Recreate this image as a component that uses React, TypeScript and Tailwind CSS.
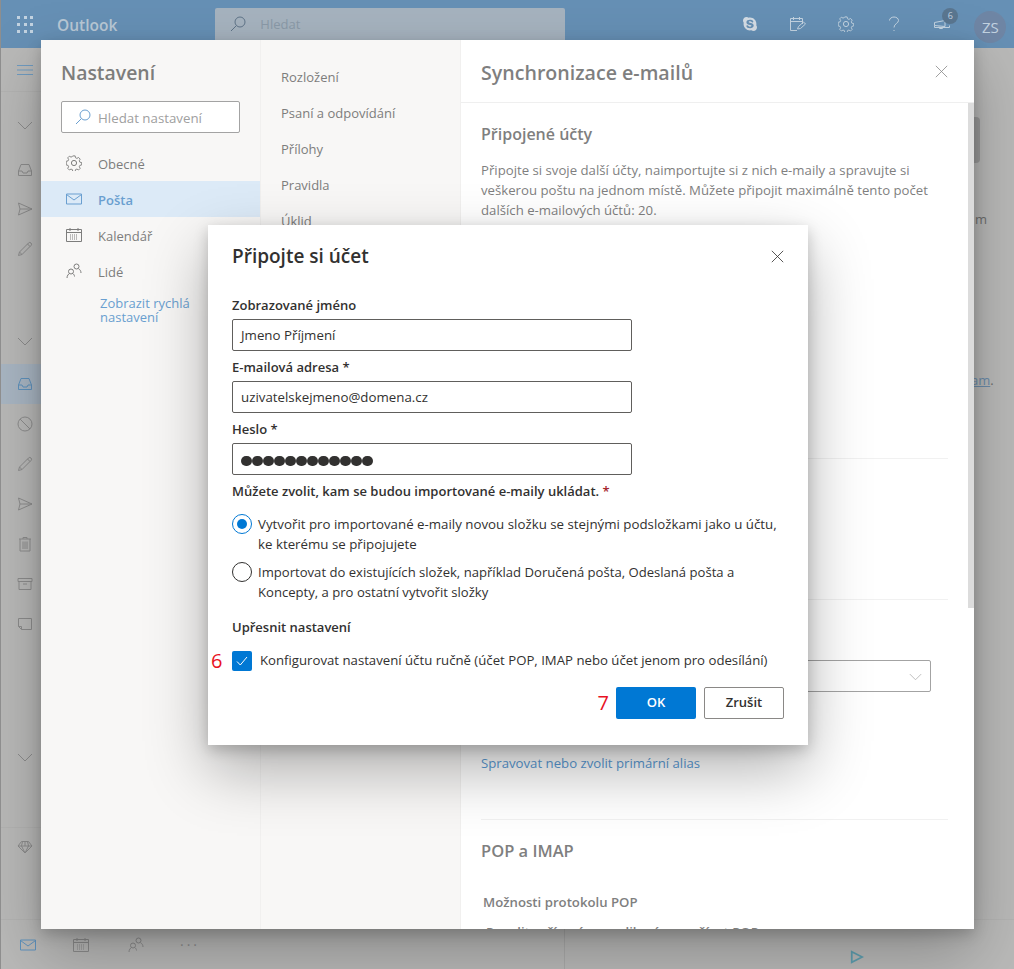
import { FaSkype } from "react-icons/fa";

type IconProps = { className?: string };

const Svg = ({ className, children }: IconProps & { children: React.ReactNode }) => (
  <svg viewBox="0 0 16 16" fill="none" stroke="currentColor" strokeWidth="1" className={className}>
    {children}
  </svg>
);

const SearchIcon = ({ className }: IconProps) => (
  <Svg className={className}>
    <circle cx="10" cy="6" r="5" />
    <path d="M6.4 9.6 1 15" />
  </Svg>
);
const ChevronIcon = ({ className }: IconProps) => (
  <Svg className={className}>
    <path d="M1 5l7 7 7-7" />
  </Svg>
);
const InboxIcon = ({ className }: IconProps) => (
  <Svg className={className}>
    <path d="M1.5 9 4 2.5h8L14.5 9v4.5h-13zM1.5 9H5l1 2h4l1-2h3.5" />
  </Svg>
);
const SendIcon = ({ className }: IconProps) => (
  <Svg className={className}>
    <path d="M1.5 2 15 8 1.5 14l1.5-6zM3 8h12" />
  </Svg>
);
const PencilIcon = ({ className }: IconProps) => (
  <Svg className={className}>
    <path d="M1.5 14.5 2.5 11 11.5 2a1.6 1.6 0 0 1 2.5 2.5L5 13.5zM2.5 11 5 13.5M10.5 3l2.5 2.5" />
  </Svg>
);
const BlockIcon = ({ className }: IconProps) => (
  <Svg className={className}>
    <circle cx="8" cy="8" r="7" />
    <path d="M3 3l10 10" />
  </Svg>
);
const TrashIcon = ({ className }: IconProps) => (
  <Svg className={className}>
    <path d="M2 3h12M3 3v12h10V3M6 3V1.5h4V3M6 5.5V13M8 5.5V13M10 5.5V13" />
  </Svg>
);
const ArchiveIcon = ({ className }: IconProps) => (
  <Svg className={className}>
    <path d="M1 2.5h14v3H1zM2 5.5v8h12v-8M6 8h4" />
  </Svg>
);
const NoteIcon = ({ className }: IconProps) => (
  <Svg className={className}>
    <path d="M1.5 2.5h13v11h-10l-3-3zM1.5 10.5h3v3" />
  </Svg>
);
const GemIcon = ({ className }: IconProps) => (
  <Svg className={className}>
    <path d="M4.5 2.5h7L15 7l-7 7-7-7zM1 7h14M5.5 2.5 4.5 7 8 14l3.5-7-1-4.5M8 2.5V7" />
  </Svg>
);
const GearIcon = ({ className }: IconProps) => (
  <Svg className={className}>
    <circle cx="8" cy="8" r="2.6" />
    <path d="M6.7 1h2.600l.4 2 1.500.7 1.800-1 1.800 1.800-1 1.800.6 1.500 2 .4v2.600l-2 .5-.6 1.500 1 1.700-1.800 1.800-1.800-1-1.500.6-.4 2.100H6.700l-.4-2.100-1.500-.6-1.800 1-1.800-1.800 1-1.700-.6-1.500-2-.5V6.800l2-.4.6-1.500-1-1.800L3 1.300l1.800 1 1.500-.7z" transform="translate(.6 0) scale(.92)" />
  </Svg>
);
const MailIcon = ({ className }: IconProps) => (
  <Svg className={className}>
    <path d="M.5 3h15v10H.5zM.5 3.5 8 9l7.500-5.500" />
  </Svg>
);
const CalendarIcon = ({ className }: IconProps) => (
  <Svg className={className}>
    <path d="M.5 2.5h15v12H.5zM.5 5.500h15M4 1v3M12 1v3" />
    <path d="M4 8h8M4 10h8M4 12h8" strokeDasharray="1 1" />
  </Svg>
);
const PeopleIcon = ({ className }: IconProps) => (
  <Svg className={className}>
    <circle cx="5" cy="8.5" r="2.5" />
    <circle cx="10.500" cy="3.5" r="2.5" />
    <path d="M1 15c0-2.500 1.500-4 2.500-4.500M6.500 10.500c1 .5 2 1.500 2 3M12.500 5.700C14 6.500 15 8 15 10" />
  </Svg>
);
const CloseIcon = ({ className }: IconProps) => (
  <Svg className={className}>
    <path d="M1 1l14 14M15 1 1 15" />
  </Svg>
);

const railTop = [
  { Icon: ChevronIcon, y: "mt-[25px]" },
  { Icon: InboxIcon, y: "mt-[29px]" },
  { Icon: SendIcon, y: "mt-[23px]" },
  { Icon: PencilIcon, y: "mt-[24px]" },
];

const railFolders = [BlockIcon, PencilIcon, SendIcon, TrashIcon, ArchiveIcon, NoteIcon];

const settingsNav = [
  { label: "Obecné", Icon: GearIcon },
  { label: "Pošta", Icon: MailIcon, active: true },
  { label: "Kalendář", Icon: CalendarIcon },
  { label: "Lidé", Icon: PeopleIcon },
];

const mailNav = ["Rozložení", "Psaní a odpovídání", "Přílohy", "Pravidla", "Úklid"];

const Field = ({ label, value, dots }: { label: string; value: string; dots?: boolean }) => (
  <div>
    <div className="h-[20px] text-[13px] leading-[20px] font-semibold text-[#323130]">{label}</div>
    <div className="mt-[4px] flex h-[32px] w-[400px] items-center rounded-[2px] border border-[#605e5c] bg-white px-[8px] pt-[2px]">
      {dots ? (
        <span className="mt-[2px] flex gap-[0.5px]">
          {Array.from({ length: 12 }).map((_, i) => (
            <span key={i} className="h-[10.5px] w-[10.5px] rounded-full bg-[#323130]" />
          ))}
        </span>
      ) : (
        <span className="text-[13.3px] text-[#323130]">{value}</span>
      )}
    </div>
  </div>
);

const AccountDialog = () => (
  <div className="absolute top-[225px] left-[207px] h-[520px] w-[600px] bg-white px-[24px] shadow-[0_25px_58px_rgba(0,0,0,0.3),0_5px_14px_rgba(0,0,0,0.2)]">
    <div className="flex h-[62px] items-center justify-between">
      <h2 className="text-[19px] font-semibold text-[#323130]">Připojte si účet</h2>
      <CloseIcon className="h-[13px] w-[13px] text-[#323130]" />
    </div>
    <div className="mt-[8px] flex flex-col gap-[6px]">
      <Field label="Zobrazované jméno" value="Jmeno Příjmení" />
      <Field label="E-mailová adresa *" value="uzivatelskejmeno@domena.cz" />
      <Field label="Heslo *" value="" dots />
    </div>
    <div className="mt-[6px] text-[13px] leading-[20px] font-semibold text-[#323130]">
      Můžete zvolit, kam se budou importované e-maily ukládat. <span className="text-[#a4262c]">*</span>
    </div>
    <div className="mt-[12px] flex gap-[6px]">
      <span className="mt-[1px] flex h-[20px] w-[20px] shrink-0 items-center justify-center rounded-full border border-[#0078d4]">
        <span className="h-[10px] w-[10px] rounded-full bg-[#0078d4]" />
      </span>
      <p className="pt-[1px] text-[13.3px] leading-[20px] text-[#323130]">
        Vytvořit pro importované e-maily novou složku se stejnými podsložkami jako u účtu, ke kterému se připojujete
      </p>
    </div>
    <div className="mt-[7px] flex gap-[6px]">
      <span className="mt-[1px] h-[20px] w-[20px] shrink-0 rounded-full border border-[#323130]" />
      <p className="pt-[1px] text-[13.1px] leading-[20px] text-[#323130]">
        Importovat do existujících složek, například Doručená pošta, Odeslaná pošta a Koncepty, a pro ostatní vytvořit složky
      </p>
    </div>
    <div className="mt-[15px] h-[34px] text-[13px] leading-[20px] font-semibold text-[#323130]">Upřesnit nastavení</div>
    <div className="relative flex items-center gap-[8px]">
      <span className="absolute left-[-21px] text-[20px] leading-none text-[#e81123]">6</span>
      <span className="flex h-[20px] w-[20px] items-center justify-center rounded-[2px] bg-[#0078d4]">
        <svg viewBox="0 0 12 12" fill="none" stroke="white" strokeWidth="1" className="h-[12px] w-[12px]">
          <path d="M1 6.5 4.300 10 11 2" />
        </svg>
      </span>
      <span className="text-[13.2px] text-[#323130]">Konfigurovat nastavení účtu ručně (účet POP, IMAP nebo účet jenom pro odesílání)</span>
    </div>
    <div className="relative mt-[16px] flex justify-end gap-[8px]">
      <span className="absolute right-[175px] text-[20px] leading-[32px] text-[#e81123]">7</span>
      <button className="h-[32px] w-[80px] rounded-[2px] bg-[#0078d4] text-[13px] font-semibold text-white">OK</button>
      <button className="h-[32px] w-[80px] rounded-[2px] border border-[#8a8886] bg-white text-[13px] font-semibold text-[#323130]">Zrušit</button>
    </div>
  </div>
);

const SettingsPanel = () => (
  <div className="absolute top-[40px] left-[40px] flex h-[889px] w-[933px] shadow-[0_25px_58px_rgba(0,0,0,0.25),0_5px_14px_rgba(0,0,0,0.2)]">
    {/* prvni sloupec */}
    <div className="w-[219px] shrink-0 bg-[#f8f7f6] text-[#7d7d7c]">
      <div className="px-[20px] pt-[16px] text-[19.4px] leading-[34px] font-semibold">Nastavení</div>
      <div className="mx-[20px] mt-[11px] flex h-[32px] w-[179px] items-center rounded-[2px] border border-[#a3a3a3] bg-white pl-[13px]">
        <SearchIcon className="h-[16px] w-[16px] text-[#6a9fd0]" />
        <span className="ml-[7px] pt-[4px] text-[13.3px] text-[#a0a0a0]">Hledat nastavení</span>
      </div>
      <div className="mt-[12px]">
        {settingsNav.map(({ label, Icon, active }) => (
          <div
            key={label}
            className={`flex h-[36px] items-center pl-[25px] text-[13px] ${active ? "bg-[#dceaf7] font-semibold text-[#6a9fd0]" : ""}`}
          >
            <Icon className="h-[16px] w-[16px]" />
            <span className="ml-[16px] pt-[4px]">{label}</span>
          </div>
        ))}
      </div>
      <div className="mt-[7px] pl-[59px] text-[13px] leading-[14px] text-[#6a9fd0]">
        Zobrazit rychlá
        <br />
        nastavení
      </div>
    </div>
    {/* druhy sloupec */}
    <div className="w-[201px] shrink-0 border-x border-[#f1f0ef] bg-[#f8f7f6] pt-[19px] pl-[20px] text-[13px] text-[#7d7d7c]">
      {mailNav.map((item) => (
        <div key={item} className="h-[36px] leading-[36px]">
          {item}
        </div>
      ))}
    </div>
    {/* treti sloupec */}
    <div className="relative flex min-w-0 flex-1 flex-col overflow-hidden bg-white text-[#7f7f7f]">
      <div className="flex h-[63px] shrink-0 items-center justify-between border-b border-[#efefef] pr-[26px] pl-[20px]">
        <h1 className="pt-[3px] text-[19.6px] font-semibold">Synchronizace e-mailů</h1>
        <CloseIcon className="h-[13px] w-[13px] text-[#8a8a8a]" />
      </div>
      <div className="absolute top-[63px] right-0 h-[505px] w-[6px] bg-[#dcdcdc]" />
      <div className="pr-[26px] pl-[20px]">
        <h3 className="mt-[19px] text-[16px] leading-[24px] font-semibold">Připojené účty</h3>
        <p className="mt-[14px] w-[460px] text-[13.2px] leading-[20px]">
          Připojte si svoje další účty, naimportujte si z nich e-maily a spravujte si veškerou poštu na jednom místě. Můžete připojit maximálně tento počet dalších e-mailových účtů: 20.
        </p>
        <div className="mt-[238px] border-t border-[#f1f1f1]" />
        <div className="mt-[140px] border-t border-[#f1f1f1]" />
        <div className="mt-[60px] mr-[17px] flex h-[32px] items-center justify-end rounded-[2px] border border-[#a3a3a3] pr-[8px]">
          <ChevronIcon className="h-[13px] w-[13px] text-[#b0b0b0]" />
        </div>
        <div className="mt-[61px] text-[13.2px] leading-[20px] text-[#5a9bd5]">Spravovat nebo zvolit primární alias</div>
        <div className="mt-[46px] border-t border-[#f1f1f1]" />
        <h3 className="mt-[19px] text-[16.5px] leading-[24px] font-semibold">POP a IMAP</h3>
        <div className="mt-[29px] ml-[2px] text-[13.2px] leading-[20px] font-semibold">Možnosti protokolu POP</div>
        <div className="mt-[10px] ml-[5px] text-[13.2px] leading-[20px] font-semibold">Povolit zařízením a aplikacím používat POP</div>
      </div>
    </div>
  </div>
);

export default function App() {
  return (
    <div className="relative flex h-[969px] w-[1014px] flex-col overflow-hidden border-l border-[#8e8e8e] bg-[#b9b9b8] font-['Open_Sans','Noto_Sans',sans-serif]">
      {/* horni lista */}
      <header className="flex h-[48px] shrink-0 bg-[#6690b5] text-[#c3d3e1]">
        <div className="grid h-[48px] w-[48px] grid-cols-3 content-center gap-[4px] px-[16px]">
          {Array.from({ length: 9 }).map((_, i) => (
            <span key={i} className="h-[3px] w-[3px] bg-[#c3d3e1]" />
          ))}
        </div>
        <div className="ml-[8px] pt-[11px] text-[15.5px] leading-[28px] font-semibold text-[#b9c8d5]">Outlook</div>
        <div className="mt-[8px] ml-[98px] flex h-[40px] w-[350px] items-start rounded-t-[2px] bg-[#a6b3bf] pt-[8px] pl-[15px]">
          <SearchIcon className="h-[16px] w-[16px] text-[#5f7488]" />
          <span className="ml-[14px] text-[13px] leading-[16px] text-[#8a9aa8]">Hledat</span>
        </div>
        <div className="ml-[177px] flex items-start gap-[32px] pt-[16px]">
          <FaSkype className="h-[16px] w-[16px] text-[#d5dde5]" />
          <svg viewBox="0 0 16 16" fill="none" stroke="currentColor" className="h-[16px] w-[16px]">
            <path d="M7 14.5H.5v-12h12V8M.5 5.500h12M3.500 1v3M9.500 1v3M7.500 13l1-2.500 5-4.500 2 2-5 4.500z" />
          </svg>
          <GearIcon className="h-[16px] w-[16px]" />
          <svg viewBox="0 0 16 16" fill="none" stroke="currentColor" className="h-[16px] w-[16px]">
            <path d="M3.500 4.500C3.500 2.500 5.500 1 8 1s4.500 1.500 4.500 3.500C12.500 7.500 8 7.500 8 11.500M8 14v1" />
          </svg>
          <div className="relative">
            <svg viewBox="0 0 16 16" fill="none" stroke="currentColor" className="h-[16px] w-[16px]">
              <path d="M.5 6.500 11 4.500v6l-10.500-1zM.5 9.500v2h15v-2M5 10.500l.5 2h3L9 10.500" />
            </svg>
            <span className="absolute top-[-8px] right-[-8px] flex h-[16px] w-[16px] items-center justify-center rounded-full bg-[#5a7690] text-[9px] text-[#c3d3e1]">6</span>
          </div>
          <div className="mt-[-5px] ml-[-8px] flex h-[32px] w-[32px] items-center justify-center rounded-full bg-[#6f86a5] text-[15px] text-[#c3d3e1]">ZS</div>
        </div>
      </header>
      <div className="flex min-h-0 flex-1">
        {/* levy pruh */}
        <aside className="flex h-full w-[48px] shrink-0 flex-col items-start text-[#8c8c8c]">
          <div className="flex h-[44px] w-full items-center border-b border-[#b3b3b2] pl-[16px] text-[#6f9bc0]">
            <svg viewBox="0 0 16 10" fill="none" stroke="currentColor" className="h-[10px] w-[16px]">
              <path d="M0 .5h16M0 5h16M0 9.500h16" />
            </svg>
          </div>
          <div className="flex flex-col pl-[16px]">
            {railTop.map(({ Icon, y }, i) => (
              <Icon key={i} className={`${y} h-4 w-4`} />
            ))}
            <ChevronIcon className="mt-[76px] h-4 w-4" />
          </div>
          <div className="mt-[15px] flex h-[40px] w-[41px] items-center bg-[#a9b6c3] pl-[16px] text-[#5f92bd]">
            <InboxIcon className="h-4 w-4" />
          </div>
          <div className="flex flex-col gap-[24px] pt-[12px] pl-[16px]">
            {railFolders.map((Icon, i) => (
              <Icon key={i} className="h-4 w-4" />
            ))}
          </div>
          <ChevronIcon className="mt-[117px] ml-[16px] h-4 w-4" />
          <div className="mt-[62px] w-[41px] border-t border-[#b3b3b2]" />
          <GemIcon className="mt-[11px] ml-[16px] h-4 w-4" />
        </aside>
      </div>
      {/* spodni lista */}
      <footer className="absolute bottom-0 left-0 flex h-[50px] w-full items-center border-t border-[#b3b3b2] text-[#8c8c8c]">
        <MailIcon className="ml-[19px] h-[16px] w-[16px] text-[#5f92bd]" />
        <CalendarIcon className="ml-[37px] h-[16px] w-[16px]" />
        <PeopleIcon className="ml-[39px] h-[16px] w-[16px]" />
        <span className="ml-[36px] text-[14px] tracking-[3px]">···</span>
        <div className="ml-[364px] h-full border-l border-[#ababaa]" />
        <svg viewBox="0 0 16 16" fill="none" stroke="#5f9fb0" strokeWidth="2" className="mt-[24px] ml-[285px] h-[14px] w-[14px]">
          <path d="M2 2l12 6-12 6z" />
        </svg>
      </footer>
      {/* kousky obsahu vykukujici za panelem */}
      <div className="absolute top-[117px] left-[973px] h-[46px] w-[6px] rounded-r-[4px] bg-[#9a9a9a]" />
      <div className="absolute top-[210px] left-[974px] text-[13px] text-[#6e6e6e]">m</div>
      <div className="absolute top-[371px] left-[970px] text-[13px] text-[#6e6e6e]">
        <span className="text-[#6b8cab] underline">am</span>.
      </div>
      <SettingsPanel />
      <AccountDialog />
    </div>
  );
}
